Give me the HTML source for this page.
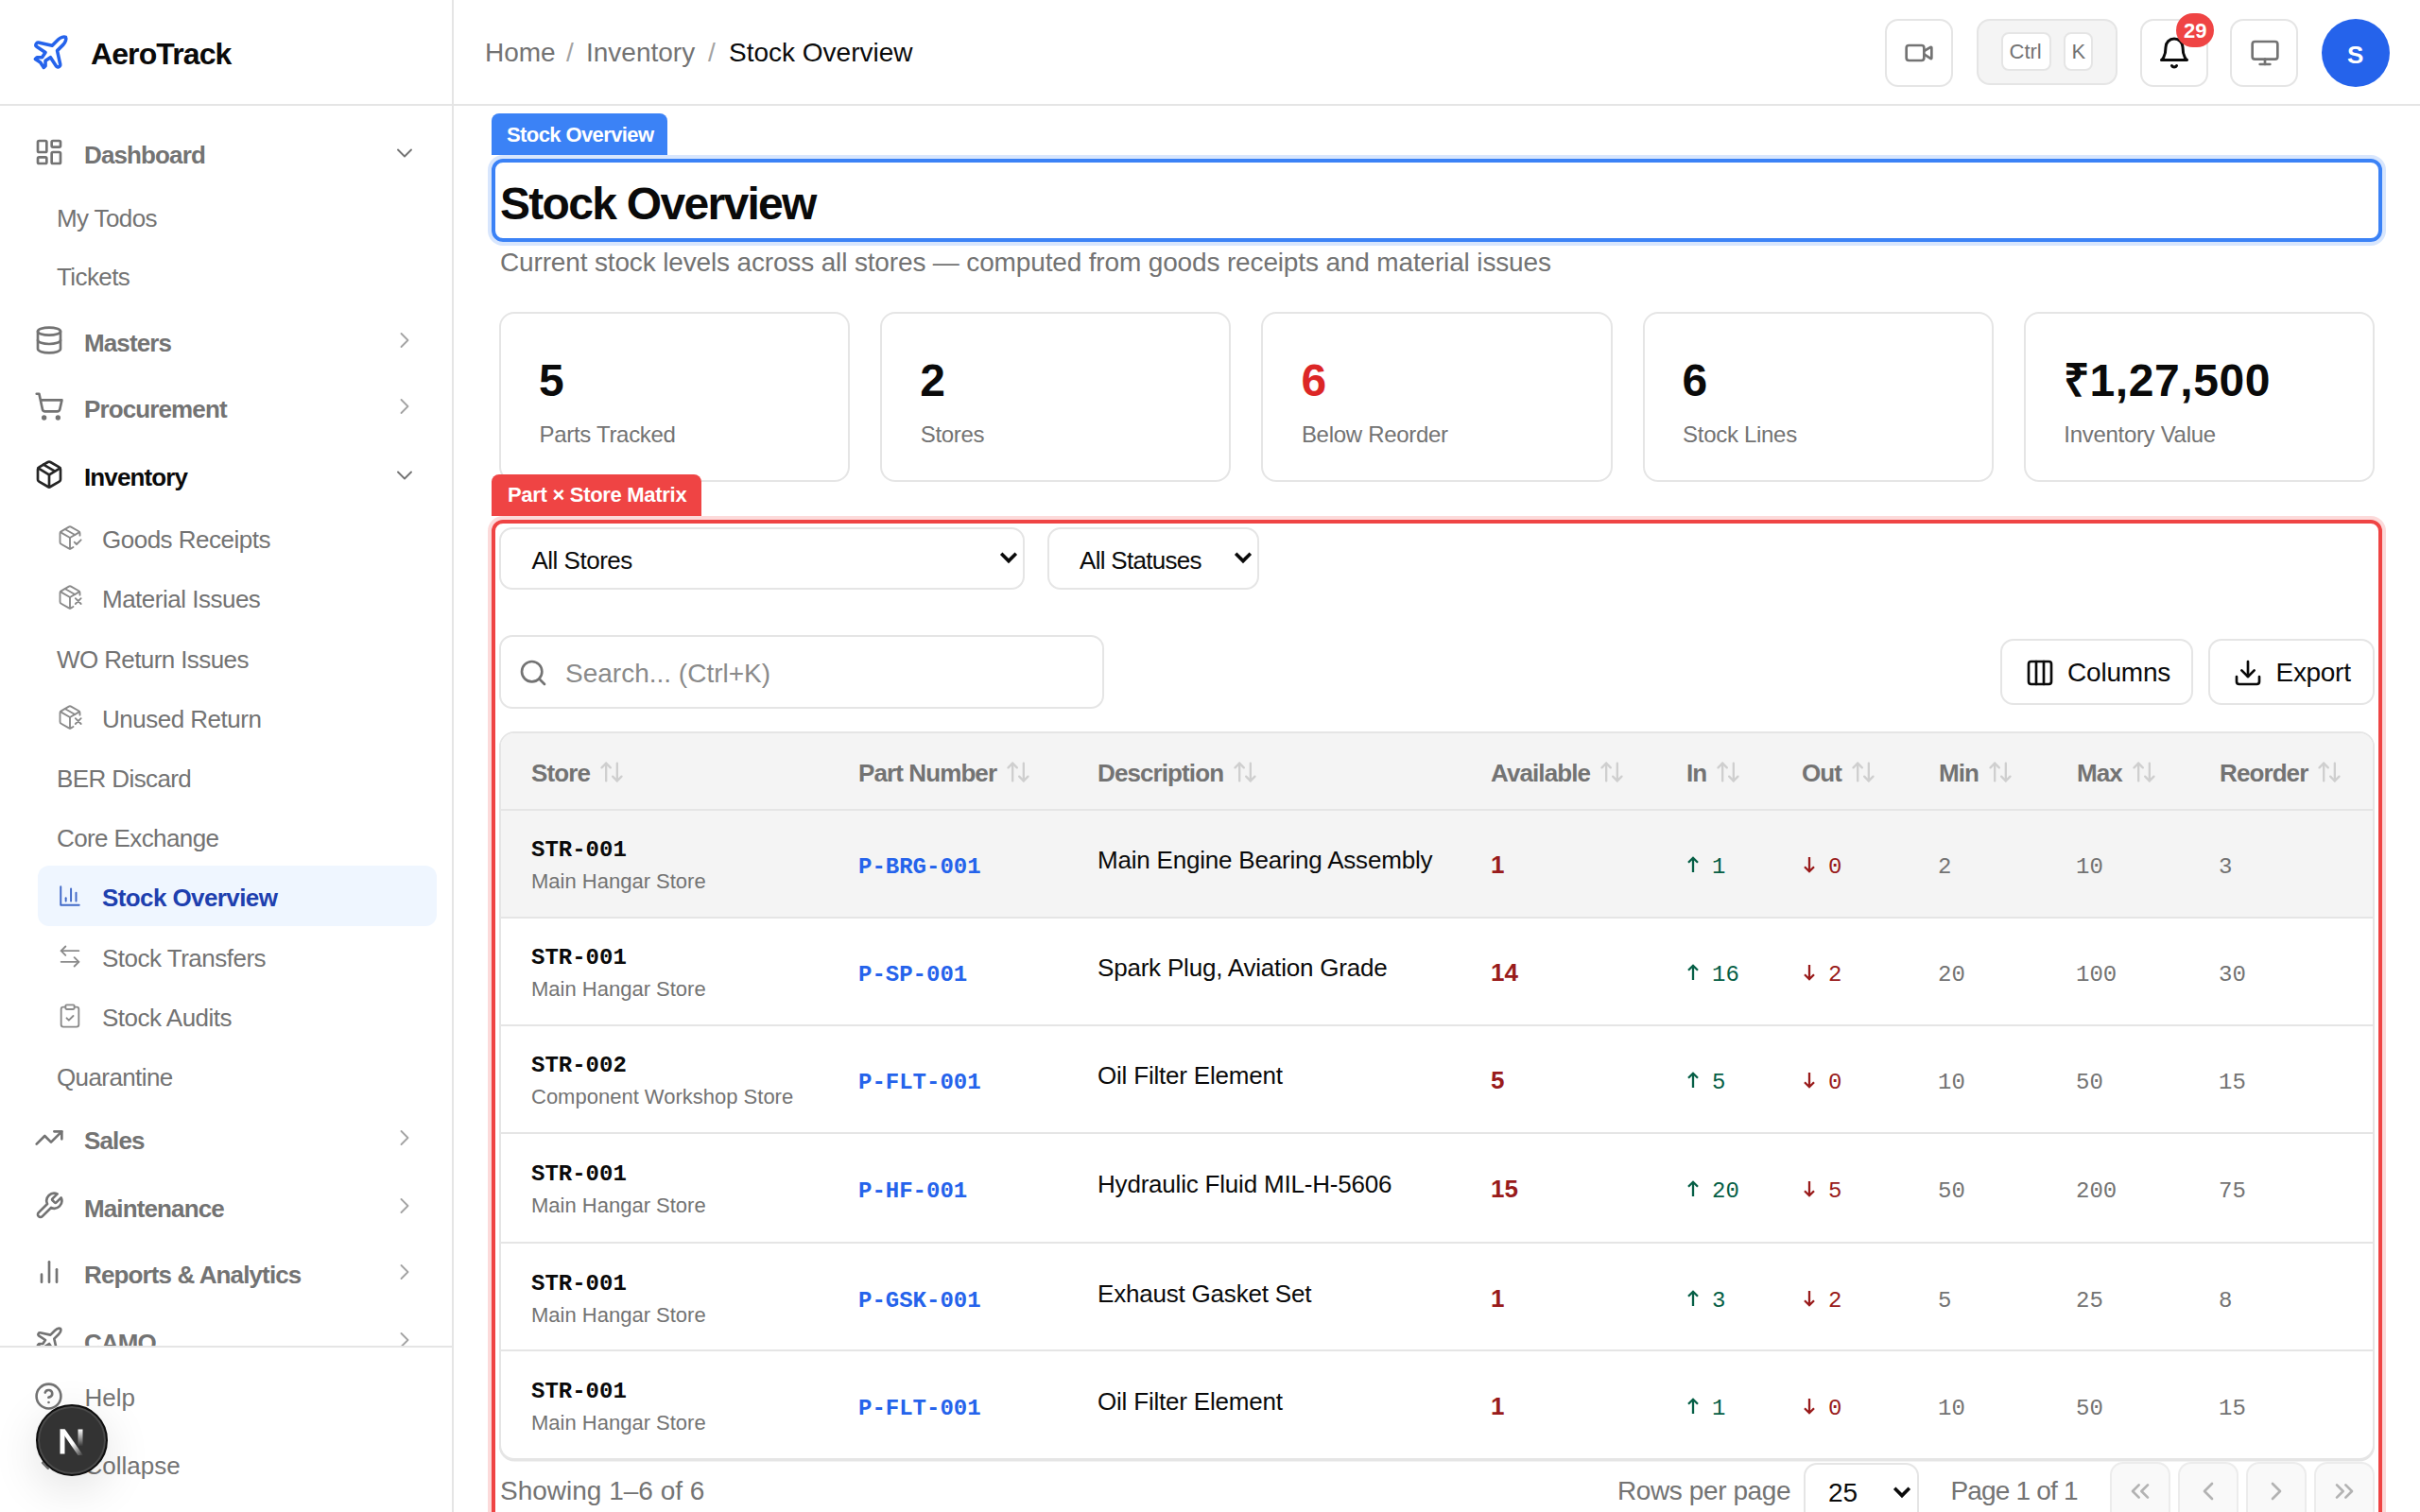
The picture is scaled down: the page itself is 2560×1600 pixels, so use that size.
<!DOCTYPE html>
<html><head><meta charset="utf-8">
<style>
*{box-sizing:border-box;margin:0;padding:0}
html,body{width:2560px;height:1600px;overflow:hidden;background:#fff;font-family:"Liberation Sans",sans-serif;color:#0a0a0a}
svg{display:block}
</style></head><body>
<div style="position:absolute;left:0;top:0;width:480px;height:1600px;background:#fff;overflow:hidden">
<svg style="position:absolute;left:32.3px;top:34.4px;" width="42.8" height="42.8" viewBox="0 0 24 24" fill="none" stroke="#2563eb" stroke-width="2" stroke-linecap="round" stroke-linejoin="round"><path d="M17.8 19.2 16 11l3.5-3.5C21 6 21.5 4 21 3c-1-.5-3 0-4.5 1.5L13 8 4.8 6.2c-.5-.1-.9.1-1.1.5l-.3.5c-.2.5-.1 1 .3 1.3L9 12l-2 3H4l-1 1 3 2 2 3 1-1v-3l3-2 3.5 5.3c.3.4.8.5 1.3.3l.5-.2c.4-.3.6-.7.5-1.2z"/></svg>
<div style="position:absolute;left:96.0px;top:40.7px;font-size:32px;line-height:32px;white-space:nowrap;font-weight:bold;color:#0a0a0a;letter-spacing:-0.9px">AeroTrack</div>
<div style="position:absolute;left:0;top:110px;width:478px;height:2px;background:#e5e5e5"></div>
<div style="position:absolute;left:0;top:112px;width:478px;height:1313px;overflow:hidden">
<svg style="position:absolute;left:36.0px;top:32.5px;" width="32" height="32" viewBox="0 0 24 24" fill="none" stroke="#737373" stroke-width="2" stroke-linecap="round" stroke-linejoin="round"><rect width="7" height="9" x="3" y="3" rx="1"/><rect width="7" height="5" x="14" y="3" rx="1"/><rect width="7" height="9" x="14" y="12" rx="1"/><rect width="7" height="5" x="3" y="16" rx="1"/></svg>
<div style="position:absolute;left:89.0px;top:38.5px;font-size:26px;line-height:26px;white-space:nowrap;font-weight:bold;color:#737373;letter-spacing:-0.88px">Dashboard</div>
<svg style="position:absolute;left:414.0px;top:35.5px;" width="28" height="28" viewBox="0 0 24 24" fill="none" stroke="#737373" stroke-width="1.6" stroke-linecap="round" stroke-linejoin="round"><path d="m6 9 6 6 6-6"/></svg>
<svg style="position:absolute;left:36.0px;top:232.0px;" width="32" height="32" viewBox="0 0 24 24" fill="none" stroke="#737373" stroke-width="2" stroke-linecap="round" stroke-linejoin="round"><ellipse cx="12" cy="5" rx="9" ry="3"/><path d="M3 5V19A9 3 0 0 0 21 19V5"/><path d="M3 12A9 3 0 0 0 21 12"/></svg>
<div style="position:absolute;left:89.0px;top:238.0px;font-size:26px;line-height:26px;white-space:nowrap;font-weight:bold;color:#737373;letter-spacing:-0.88px">Masters</div>
<svg style="position:absolute;left:414.0px;top:234.0px;" width="28" height="28" viewBox="0 0 24 24" fill="none" stroke="#a3a3a3" stroke-width="1.6" stroke-linecap="round" stroke-linejoin="round"><path d="m9 18 6-6-6-6"/></svg>
<svg style="position:absolute;left:36.0px;top:302.0px;" width="32" height="32" viewBox="0 0 24 24" fill="none" stroke="#737373" stroke-width="2" stroke-linecap="round" stroke-linejoin="round"><circle cx="8" cy="21" r="1"/><circle cx="19" cy="21" r="1"/><path d="M2.05 2.05h2l2.66 12.42a2 2 0 0 0 2 1.58h9.78a2 2 0 0 0 1.95-1.57l1.65-7.43H5.12"/></svg>
<div style="position:absolute;left:89.0px;top:308.0px;font-size:26px;line-height:26px;white-space:nowrap;font-weight:bold;color:#737373;letter-spacing:-0.88px">Procurement</div>
<svg style="position:absolute;left:414.0px;top:304.0px;" width="28" height="28" viewBox="0 0 24 24" fill="none" stroke="#a3a3a3" stroke-width="1.6" stroke-linecap="round" stroke-linejoin="round"><path d="m9 18 6-6-6-6"/></svg>
<svg style="position:absolute;left:36.0px;top:374.0px;" width="32" height="32" viewBox="0 0 24 24" fill="none" stroke="#262626" stroke-width="2" stroke-linecap="round" stroke-linejoin="round"><path d="M11 21.73a2 2 0 0 0 2 0l7-4A2 2 0 0 0 21 16V8a2 2 0 0 0-1-1.73l-7-4a2 2 0 0 0-2 0l-7 4A2 2 0 0 0 3 8v8a2 2 0 0 0 1 1.73z"/><path d="M12 22V12"/><path d="m3.3 7 7.703 4.734a2 2 0 0 0 1.994 0L20.7 7"/><path d="m7.5 4.27 9 5.15"/></svg>
<div style="position:absolute;left:89.0px;top:380.0px;font-size:26px;line-height:26px;white-space:nowrap;font-weight:bold;color:#0a0a0a;letter-spacing:-0.88px">Inventory</div>
<svg style="position:absolute;left:414.0px;top:377.0px;" width="28" height="28" viewBox="0 0 24 24" fill="none" stroke="#737373" stroke-width="1.6" stroke-linecap="round" stroke-linejoin="round"><path d="m6 9 6 6 6-6"/></svg>
<svg style="position:absolute;left:36.0px;top:1076.0px;" width="32" height="32" viewBox="0 0 24 24" fill="none" stroke="#737373" stroke-width="2" stroke-linecap="round" stroke-linejoin="round"><polyline points="22 7 13.5 15.5 8.5 10.5 2 17"/><polyline points="16 7 22 7 22 13"/></svg>
<div style="position:absolute;left:89.0px;top:1082.0px;font-size:26px;line-height:26px;white-space:nowrap;font-weight:bold;color:#737373;letter-spacing:-0.88px">Sales</div>
<svg style="position:absolute;left:414.0px;top:1078.0px;" width="28" height="28" viewBox="0 0 24 24" fill="none" stroke="#a3a3a3" stroke-width="1.6" stroke-linecap="round" stroke-linejoin="round"><path d="m9 18 6-6-6-6"/></svg>
<svg style="position:absolute;left:36.0px;top:1148.0px;" width="32" height="32" viewBox="0 0 24 24" fill="none" stroke="#737373" stroke-width="2" stroke-linecap="round" stroke-linejoin="round"><path d="M14.7 6.3a1 1 0 0 0 0 1.4l1.6 1.6a1 1 0 0 0 1.4 0l3.77-3.77a6 6 0 0 1-7.94 7.94l-6.91 6.91a2.12 2.12 0 0 1-3-3l6.91-6.91a6 6 0 0 1 7.94-7.94l-3.76 3.76z"/></svg>
<div style="position:absolute;left:89.0px;top:1154.0px;font-size:26px;line-height:26px;white-space:nowrap;font-weight:bold;color:#737373;letter-spacing:-0.88px">Maintenance</div>
<svg style="position:absolute;left:414.0px;top:1150.0px;" width="28" height="28" viewBox="0 0 24 24" fill="none" stroke="#a3a3a3" stroke-width="1.6" stroke-linecap="round" stroke-linejoin="round"><path d="m9 18 6-6-6-6"/></svg>
<svg style="position:absolute;left:36.0px;top:1218.0px;" width="32" height="32" viewBox="0 0 24 24" fill="none" stroke="#737373" stroke-width="2" stroke-linecap="round" stroke-linejoin="round"><line x1="18" x2="18" y1="20" y2="10"/><line x1="12" x2="12" y1="20" y2="4"/><line x1="6" x2="6" y1="20" y2="14"/></svg>
<div style="position:absolute;left:89.0px;top:1224.0px;font-size:26px;line-height:26px;white-space:nowrap;font-weight:bold;color:#737373;letter-spacing:-0.88px">Reports &amp; Analytics</div>
<svg style="position:absolute;left:414.0px;top:1220.0px;" width="28" height="28" viewBox="0 0 24 24" fill="none" stroke="#a3a3a3" stroke-width="1.6" stroke-linecap="round" stroke-linejoin="round"><path d="m9 18 6-6-6-6"/></svg>
<svg style="position:absolute;left:36.0px;top:1290.0px;" width="32" height="32" viewBox="0 0 24 24" fill="none" stroke="#737373" stroke-width="2" stroke-linecap="round" stroke-linejoin="round"><path d="M17.8 19.2 16 11l3.5-3.5C21 6 21.5 4 21 3c-1-.5-3 0-4.5 1.5L13 8 4.8 6.2c-.5-.1-.9.1-1.1.5l-.3.5c-.2.5-.1 1 .3 1.3L9 12l-2 3H4l-1 1 3 2 2 3 1-1v-3l3-2 3.5 5.3c.3.4.8.5 1.3.3l.5-.2c.4-.3.6-.7.5-1.2z"/></svg>
<div style="position:absolute;left:89.0px;top:1296.0px;font-size:26px;line-height:26px;white-space:nowrap;font-weight:bold;color:#737373;letter-spacing:-0.88px">CAMO</div>
<svg style="position:absolute;left:414.0px;top:1292.0px;" width="28" height="28" viewBox="0 0 24 24" fill="none" stroke="#a3a3a3" stroke-width="1.6" stroke-linecap="round" stroke-linejoin="round"><path d="m9 18 6-6-6-6"/></svg>
<div style="position:absolute;left:60.0px;top:106.0px;font-size:26px;line-height:26px;white-space:nowrap;color:#737373;letter-spacing:-0.6px">My Todos</div>
<div style="position:absolute;left:60.0px;top:168.0px;font-size:26px;line-height:26px;white-space:nowrap;color:#737373;letter-spacing:-0.6px">Tickets</div>
<svg style="position:absolute;left:59.7px;top:443.2px;" width="28" height="28" viewBox="0 0 24 24" fill="none" stroke="#8a8a8a" stroke-width="1.6" stroke-linecap="round" stroke-linejoin="round"><path d="m16 16 2 2 4-4"/><path d="M21 10V8a2 2 0 0 0-1-1.73l-7-4a2 2 0 0 0-2 0l-7 4A2 2 0 0 0 3 8v8a2 2 0 0 0 1 1.73l7 4a2 2 0 0 0 2 0l2-1.14"/><path d="m7.5 4.27 9 5.15"/><polyline points="3.29 7 12 12 20.71 7"/><line x1="12" x2="12" y1="22" y2="12"/></svg>
<div style="position:absolute;left:108.0px;top:446.2px;font-size:26px;line-height:26px;white-space:nowrap;color:#737373;letter-spacing:-0.5px">Goods Receipts</div>
<svg style="position:absolute;left:59.7px;top:506.4px;" width="28" height="28" viewBox="0 0 24 24" fill="none" stroke="#8a8a8a" stroke-width="1.6" stroke-linecap="round" stroke-linejoin="round"><path d="M21 10V8a2 2 0 0 0-1-1.73l-7-4a2 2 0 0 0-2 0l-7 4A2 2 0 0 0 3 8v8a2 2 0 0 0 1 1.73l7 4a2 2 0 0 0 2 0l2-1.14"/><path d="m7.5 4.27 9 5.15"/><polyline points="3.29 7 12 12 20.71 7"/><line x1="12" x2="12" y1="22" y2="12"/><path d="m17 13 5 5m-5 0 5-5"/></svg>
<div style="position:absolute;left:108.0px;top:509.4px;font-size:26px;line-height:26px;white-space:nowrap;color:#737373;letter-spacing:-0.5px">Material Issues</div>
<div style="position:absolute;left:60.0px;top:572.6px;font-size:26px;line-height:26px;white-space:nowrap;color:#737373;letter-spacing:-0.6px">WO Return Issues</div>
<svg style="position:absolute;left:59.7px;top:632.8px;" width="28" height="28" viewBox="0 0 24 24" fill="none" stroke="#8a8a8a" stroke-width="1.6" stroke-linecap="round" stroke-linejoin="round"><path d="M21 10V8a2 2 0 0 0-1-1.73l-7-4a2 2 0 0 0-2 0l-7 4A2 2 0 0 0 3 8v8a2 2 0 0 0 1 1.73l7 4a2 2 0 0 0 2 0l2-1.14"/><path d="m7.5 4.27 9 5.15"/><polyline points="3.29 7 12 12 20.71 7"/><line x1="12" x2="12" y1="22" y2="12"/><path d="m17 13 5 5m-5 0 5-5"/></svg>
<div style="position:absolute;left:108.0px;top:635.8px;font-size:26px;line-height:26px;white-space:nowrap;color:#737373;letter-spacing:-0.5px">Unused Return</div>
<div style="position:absolute;left:60.0px;top:699.0px;font-size:26px;line-height:26px;white-space:nowrap;color:#737373;letter-spacing:-0.6px">BER Discard</div>
<div style="position:absolute;left:60.0px;top:762.2px;font-size:26px;line-height:26px;white-space:nowrap;color:#737373;letter-spacing:-0.6px">Core Exchange</div>
<div style="position:absolute;left:40px;top:804.0px;width:422px;height:64px;border-radius:12px;background:#eff6ff"></div>
<svg style="position:absolute;left:61.0px;top:823.4px;" width="26" height="26" viewBox="0 0 24 24" fill="none" stroke="#4169c8" stroke-width="1.8" stroke-linecap="round" stroke-linejoin="round"><path d="M3 3v18h18"/><path d="M18 17V9"/><path d="M13 17V5"/><path d="M8 17v-3"/></svg>
<div style="position:absolute;left:108.0px;top:825.4px;font-size:26px;line-height:26px;white-space:nowrap;font-weight:bold;color:#1e40af;letter-spacing:-0.6px">Stock Overview</div>
<svg style="position:absolute;left:59.7px;top:885.6px;" width="28" height="28" viewBox="0 0 24 24" fill="none" stroke="#8a8a8a" stroke-width="1.6" stroke-linecap="round" stroke-linejoin="round"><path d="M8 3 4 7l4 4"/><path d="M4 7h16"/><path d="m16 21 4-4-4-4"/><path d="M20 17H4"/></svg>
<div style="position:absolute;left:108.0px;top:888.6px;font-size:26px;line-height:26px;white-space:nowrap;color:#737373;letter-spacing:-0.5px">Stock Transfers</div>
<svg style="position:absolute;left:59.7px;top:948.8px;" width="28" height="28" viewBox="0 0 24 24" fill="none" stroke="#8a8a8a" stroke-width="1.6" stroke-linecap="round" stroke-linejoin="round"><rect width="8" height="4" x="8" y="2" rx="1" ry="1"/><path d="M16 4h2a2 2 0 0 1 2 2v14a2 2 0 0 1-2 2H6a2 2 0 0 1-2-2V6a2 2 0 0 1 2-2h2"/><path d="m9 14 2 2 4-4"/></svg>
<div style="position:absolute;left:108.0px;top:951.8px;font-size:26px;line-height:26px;white-space:nowrap;color:#737373;letter-spacing:-0.5px">Stock Audits</div>
<div style="position:absolute;left:60.0px;top:1015.0px;font-size:26px;line-height:26px;white-space:nowrap;color:#737373;letter-spacing:-0.6px">Quarantine</div>
</div>
<div style="position:absolute;left:0;top:1424px;width:478px;height:2px;background:#e5e5e5"></div>
<svg style="position:absolute;left:36.4px;top:1462.1px;" width="31" height="31" viewBox="0 0 24 24" fill="none" stroke="#737373" stroke-width="2" stroke-linecap="round" stroke-linejoin="round"><circle cx="12" cy="12" r="10"/><path d="M9.09 9a3 3 0 0 1 5.83 1c0 2-3 3-3 3"/><path d="M12 17h.01"/></svg>
<div style="position:absolute;left:89.5px;top:1465.7px;font-size:26px;line-height:26px;white-space:nowrap;color:#737373">Help</div>
<svg style="position:absolute;left:38.0px;top:1534.0px;" width="28" height="28" viewBox="0 0 24 24" fill="none" stroke="#737373" stroke-width="2" stroke-linecap="round" stroke-linejoin="round"><path d="m11 17-5-5 5-5"/><path d="m18 17-5-5 5-5"/></svg>
<div style="position:absolute;left:89.5px;top:1537.6px;font-size:26px;line-height:26px;white-space:nowrap;color:#737373">Collapse</div>
</div>
<div style="position:absolute;left:478px;top:0;width:2px;height:1600px;background:#e5e5e5"></div>
<div style="position:absolute;left:480px;top:110px;width:2080px;height:2px;background:#e5e5e5"></div>
<div style="position:absolute;left:513.0px;top:42.3px;font-size:28px;line-height:28px;white-space:nowrap;color:#737373">Home</div>
<div style="position:absolute;left:599.0px;top:42.3px;font-size:28px;line-height:28px;white-space:nowrap;color:#a3a3a3">/</div>
<div style="position:absolute;left:620.0px;top:42.3px;font-size:28px;line-height:28px;white-space:nowrap;color:#737373">Inventory</div>
<div style="position:absolute;left:749.0px;top:42.3px;font-size:28px;line-height:28px;white-space:nowrap;color:#a3a3a3">/</div>
<div style="position:absolute;left:771.0px;top:42.3px;font-size:28px;line-height:28px;white-space:nowrap;color:#0a0a0a;font-weight:500">Stock Overview</div>
<div style="position:absolute;left:1994px;top:20px;width:72px;height:72px;border:2px solid #e5e5e5;border-radius:14px;background:#fff"></div>
<svg style="position:absolute;left:2013.7px;top:40.0px;" width="32" height="32" viewBox="0 0 24 24" fill="none" stroke="#737373" stroke-width="2" stroke-linecap="round" stroke-linejoin="round"><path d="m16 13 5.223 3.482a.5.5 0 0 0 .777-.416V7.87a.5.5 0 0 0-.752-.432L16 10.5"/><rect x="2" y="6" width="14" height="12" rx="2"/></svg>
<div style="position:absolute;left:2091px;top:20px;width:149px;height:70px;border:2px solid #e5e5e5;border-radius:14px;background:#f4f4f4"></div>
<div style="position:absolute;left:2117px;top:34px;width:53px;height:41px;border:2px solid #e5e5e5;border-radius:8px;background:#fff"></div>
<div style="position:absolute;left:2125.5px;top:43.9px;font-size:22px;line-height:22px;white-space:nowrap;color:#737373">Ctrl</div>
<div style="position:absolute;left:2183px;top:34px;width:31px;height:41px;border:2px solid #e5e5e5;border-radius:8px;background:#fff"></div>
<div style="position:absolute;left:2191.5px;top:43.9px;font-size:22px;line-height:22px;white-space:nowrap;color:#737373">K</div>
<div style="position:absolute;left:2264px;top:20px;width:72px;height:72px;border:2px solid #e5e5e5;border-radius:14px;background:#fff"></div>
<svg style="position:absolute;left:2282.0px;top:38.0px;" width="36" height="36" viewBox="0 0 24 24" fill="none" stroke="#0a0a0a" stroke-width="2" stroke-linecap="round" stroke-linejoin="round"><path d="M6 8a6 6 0 0 1 12 0c0 7 3 9 3 9H3s3-2 3-9"/><path d="M10.3 21a1.94 1.94 0 0 0 3.4 0"/></svg>
<div style="position:absolute;left:2302px;top:14px;width:40px;height:36px;border-radius:18px;background:#ef4444"></div>
<div style="position:absolute;left:2310.0px;top:22.4px;font-size:22px;line-height:22px;white-space:nowrap;color:#fff;font-weight:bold;letter-spacing:0">29</div>
<div style="position:absolute;left:2359px;top:20px;width:72px;height:72px;border:2px solid #e5e5e5;border-radius:14px;background:#fff"></div>
<svg style="position:absolute;left:2380.0px;top:40.0px;" width="32" height="32" viewBox="0 0 24 24" fill="none" stroke="#737373" stroke-width="2" stroke-linecap="round" stroke-linejoin="round"><rect width="20" height="14" x="2" y="3" rx="2"/><line x1="8" x2="16" y1="21" y2="21"/><line x1="12" x2="12" y1="17" y2="21"/></svg>
<div style="position:absolute;left:2456px;top:20px;width:72px;height:72px;border-radius:50%;background:#2563eb"></div>
<div style="position:absolute;left:2483.0px;top:44.5px;font-size:26px;line-height:26px;white-space:nowrap;color:#fff;font-weight:bold;letter-spacing:-0.88px">S</div>
<div style="position:absolute;left:520px;top:120px;width:186px;height:44px;background:#3b82f6;border-radius:8px 8px 0 0"></div>
<div style="position:absolute;left:536.0px;top:131.7px;font-size:22px;line-height:22px;white-space:nowrap;color:#fff;font-weight:bold;letter-spacing:-0.6px">Stock Overview</div>
<div style="position:absolute;left:520px;top:168px;width:2000px;height:88px;border:4px solid #3b82f6;border-radius:12px;background:transparent;box-shadow:0 0 0 4px rgba(59,130,246,0.2)"></div>
<div style="position:absolute;left:529.0px;top:192.2px;font-size:48px;line-height:48px;white-space:nowrap;font-weight:bold;color:#0a0a0a;letter-spacing:-1.7px">Stock Overview</div>
<div style="position:absolute;left:529.0px;top:264.1px;font-size:28px;line-height:28px;white-space:nowrap;color:#737373;letter-spacing:-0.15px">Current stock levels across all stores — computed from goods receipts and material issues</div>
<div style="position:absolute;left:528.0px;top:330px;width:371.2px;height:180px;border:2px solid #e5e5e5;border-radius:16px;background:#fff;"></div>
<div style="position:absolute;left:570.0px;top:379.1px;font-size:48px;line-height:48px;white-space:nowrap;font-weight:bold;color:#0a0a0a;letter-spacing:-0.5px">5</div>
<div style="position:absolute;left:570.5px;top:447.7px;font-size:24px;line-height:24px;white-space:nowrap;color:#737373;letter-spacing:-0.3px">Parts Tracked</div>
<div style="position:absolute;left:931.2px;top:330px;width:371.2px;height:180px;border:2px solid #e5e5e5;border-radius:16px;background:#fff;"></div>
<div style="position:absolute;left:973.2px;top:379.1px;font-size:48px;line-height:48px;white-space:nowrap;font-weight:bold;color:#0a0a0a;letter-spacing:-0.5px">2</div>
<div style="position:absolute;left:973.7px;top:447.7px;font-size:24px;line-height:24px;white-space:nowrap;color:#737373;letter-spacing:-0.3px">Stores</div>
<div style="position:absolute;left:1334.4px;top:330px;width:371.2px;height:180px;border:2px solid #e5e5e5;border-radius:16px;background:#fff;"></div>
<div style="position:absolute;left:1376.4px;top:379.1px;font-size:48px;line-height:48px;white-space:nowrap;font-weight:bold;color:#dc2626;letter-spacing:-0.5px">6</div>
<div style="position:absolute;left:1376.9px;top:447.7px;font-size:24px;line-height:24px;white-space:nowrap;color:#737373;letter-spacing:-0.3px">Below Reorder</div>
<div style="position:absolute;left:1737.6px;top:330px;width:371.2px;height:180px;border:2px solid #e5e5e5;border-radius:16px;background:#fff;"></div>
<div style="position:absolute;left:1779.6px;top:379.1px;font-size:48px;line-height:48px;white-space:nowrap;font-weight:bold;color:#0a0a0a;letter-spacing:-0.5px">6</div>
<div style="position:absolute;left:1780.1px;top:447.7px;font-size:24px;line-height:24px;white-space:nowrap;color:#737373;letter-spacing:-0.3px">Stock Lines</div>
<div style="position:absolute;left:2140.8px;top:330px;width:371.2px;height:180px;border:2px solid #e5e5e5;border-radius:16px;background:#fff;"></div>
<div style="position:absolute;left:2182.8px;top:379.1px;font-size:48px;line-height:48px;white-space:nowrap;font-weight:bold;color:#0a0a0a;letter-spacing:0.6px">₹1,27,500</div>
<div style="position:absolute;left:2183.3px;top:447.7px;font-size:24px;line-height:24px;white-space:nowrap;color:#737373;letter-spacing:-0.3px">Inventory Value</div>
<div style="position:absolute;left:520px;top:502px;width:222px;height:44px;background:#ef4444;border-radius:8px 8px 0 0"></div>
<div style="position:absolute;left:537.0px;top:513.4px;font-size:22px;line-height:22px;white-space:nowrap;color:#fff;font-weight:bold;letter-spacing:-0.3px">Part × Store Matrix</div>
<div style="position:absolute;left:520px;top:550px;width:2000px;height:1200px;border:4px solid #ef4444;border-radius:12px;background:transparent;box-shadow:0 0 0 4px rgba(239,68,68,0.2)"></div>
<div style="position:absolute;left:528px;top:558px;width:556px;height:66px;border:2px solid #e5e5e5;border-radius:14px;background:#fff;"></div>
<div style="position:absolute;left:562.5px;top:579.7px;font-size:26px;line-height:26px;white-space:nowrap;color:#0a0a0a;letter-spacing:-0.5px">All Stores</div>
<svg style="position:absolute;left:1054.5px;top:581.5px" width="24" height="18" viewBox="0 0 24 18"><path d="M4.2 3.8 L12 11.6 L19.8 3.8" fill="none" stroke="#0a0a0a" stroke-width="3.6" stroke-linecap="butt" stroke-linejoin="miter"/></svg>
<div style="position:absolute;left:1108px;top:558px;width:224px;height:66px;border:2px solid #e5e5e5;border-radius:14px;background:#fff;"></div>
<div style="position:absolute;left:1142.0px;top:579.7px;font-size:26px;line-height:26px;white-space:nowrap;color:#0a0a0a;letter-spacing:-0.7px">All Statuses</div>
<svg style="position:absolute;left:1302.5px;top:581.5px" width="24" height="18" viewBox="0 0 24 18"><path d="M4.2 3.8 L12 11.6 L19.8 3.8" fill="none" stroke="#0a0a0a" stroke-width="3.6" stroke-linecap="butt" stroke-linejoin="miter"/></svg>
<div style="position:absolute;left:528px;top:672px;width:640px;height:78px;border:2px solid #e5e5e5;border-radius:14px;background:#fff;"></div>
<svg style="position:absolute;left:547.6px;top:696.3px;" width="32" height="32" viewBox="0 0 24 24" fill="none" stroke="#737373" stroke-width="2" stroke-linecap="round" stroke-linejoin="round"><circle cx="11" cy="11" r="8"/><path d="m21 21-4.3-4.3"/></svg>
<div style="position:absolute;left:598.0px;top:699.3px;font-size:28px;line-height:28px;white-space:nowrap;color:#8a8a8a">Search... (Ctrl+K)</div>
<div style="position:absolute;left:2116px;top:676px;width:204px;height:70px;border:2px solid #e5e5e5;border-radius:14px;background:#fff;"></div>
<svg style="position:absolute;left:2141.8px;top:695.8px;" width="32" height="32" viewBox="0 0 24 24" fill="none" stroke="#0a0a0a" stroke-width="2" stroke-linecap="round" stroke-linejoin="round"><rect width="18" height="18" x="3" y="3" rx="2"/><path d="M9 3v18"/><path d="M15 3v18"/></svg>
<div style="position:absolute;left:2187.0px;top:698.3px;font-size:28px;line-height:28px;white-space:nowrap;color:#0a0a0a;letter-spacing:-0.2px">Columns</div>
<div style="position:absolute;left:2336px;top:676px;width:176px;height:70px;border:2px solid #e5e5e5;border-radius:14px;background:#fff;"></div>
<svg style="position:absolute;left:2361.9px;top:695.8px;" width="32" height="32" viewBox="0 0 24 24" fill="none" stroke="#0a0a0a" stroke-width="2" stroke-linecap="round" stroke-linejoin="round"><path d="M21 15v4a2 2 0 0 1-2 2H5a2 2 0 0 1-2-2v-4"/><polyline points="7 10 12 15 17 10"/><line x1="12" x2="12" y1="15" y2="3"/></svg>
<div style="position:absolute;left:2407.5px;top:698.3px;font-size:28px;line-height:28px;white-space:nowrap;color:#0a0a0a;letter-spacing:-0.3px">Export</div>
<div style="position:absolute;left:528px;top:774px;width:1984px;height:771px;border:2px solid #e5e5e5;border-radius:16px;background:#fff;overflow:hidden;box-shadow:0 1.5px 0 #e5e5e5">
<div style="position:absolute;left:0;top:0;width:1980px;height:80px;background:#f4f4f4"></div>
<div style="position:absolute;left:0;top:80px;width:1980px;height:2px;background:#e5e5e5"></div>
<div style="position:absolute;left:32px;top:28.9px;height:26px;display:flex;align-items:flex-start;white-space:nowrap;font-size:26px;line-height:26px;font-weight:bold;color:#737373;letter-spacing:-0.9px">Store<svg style="margin-left:9px;margin-top:-2.4px;flex:none" width="28" height="28" viewBox="0 0 24 24" fill="none" stroke="#cfcfcf" stroke-width="2" stroke-linecap="round" stroke-linejoin="round"><path d="m21 16-4 4-4-4"/><path d="M17 20V4"/><path d="m3 8 4-4 4 4"/><path d="M7 4v16"/></svg></div>
<div style="position:absolute;left:378px;top:28.9px;height:26px;display:flex;align-items:flex-start;white-space:nowrap;font-size:26px;line-height:26px;font-weight:bold;color:#737373;letter-spacing:-0.9px">Part Number<svg style="margin-left:9px;margin-top:-2.4px;flex:none" width="28" height="28" viewBox="0 0 24 24" fill="none" stroke="#cfcfcf" stroke-width="2" stroke-linecap="round" stroke-linejoin="round"><path d="m21 16-4 4-4-4"/><path d="M17 20V4"/><path d="m3 8 4-4 4 4"/><path d="M7 4v16"/></svg></div>
<div style="position:absolute;left:631px;top:28.9px;height:26px;display:flex;align-items:flex-start;white-space:nowrap;font-size:26px;line-height:26px;font-weight:bold;color:#737373;letter-spacing:-0.9px">Description<svg style="margin-left:9px;margin-top:-2.4px;flex:none" width="28" height="28" viewBox="0 0 24 24" fill="none" stroke="#cfcfcf" stroke-width="2" stroke-linecap="round" stroke-linejoin="round"><path d="m21 16-4 4-4-4"/><path d="M17 20V4"/><path d="m3 8 4-4 4 4"/><path d="M7 4v16"/></svg></div>
<div style="position:absolute;left:1047px;top:28.9px;height:26px;display:flex;align-items:flex-start;white-space:nowrap;font-size:26px;line-height:26px;font-weight:bold;color:#737373;letter-spacing:-0.9px">Available<svg style="margin-left:9px;margin-top:-2.4px;flex:none" width="28" height="28" viewBox="0 0 24 24" fill="none" stroke="#cfcfcf" stroke-width="2" stroke-linecap="round" stroke-linejoin="round"><path d="m21 16-4 4-4-4"/><path d="M17 20V4"/><path d="m3 8 4-4 4 4"/><path d="M7 4v16"/></svg></div>
<div style="position:absolute;left:1254px;top:28.9px;height:26px;display:flex;align-items:flex-start;white-space:nowrap;font-size:26px;line-height:26px;font-weight:bold;color:#737373;letter-spacing:-0.9px">In<svg style="margin-left:9px;margin-top:-2.4px;flex:none" width="28" height="28" viewBox="0 0 24 24" fill="none" stroke="#cfcfcf" stroke-width="2" stroke-linecap="round" stroke-linejoin="round"><path d="m21 16-4 4-4-4"/><path d="M17 20V4"/><path d="m3 8 4-4 4 4"/><path d="M7 4v16"/></svg></div>
<div style="position:absolute;left:1376px;top:28.9px;height:26px;display:flex;align-items:flex-start;white-space:nowrap;font-size:26px;line-height:26px;font-weight:bold;color:#737373;letter-spacing:-0.9px">Out<svg style="margin-left:9px;margin-top:-2.4px;flex:none" width="28" height="28" viewBox="0 0 24 24" fill="none" stroke="#cfcfcf" stroke-width="2" stroke-linecap="round" stroke-linejoin="round"><path d="m21 16-4 4-4-4"/><path d="M17 20V4"/><path d="m3 8 4-4 4 4"/><path d="M7 4v16"/></svg></div>
<div style="position:absolute;left:1521px;top:28.9px;height:26px;display:flex;align-items:flex-start;white-space:nowrap;font-size:26px;line-height:26px;font-weight:bold;color:#737373;letter-spacing:-0.9px">Min<svg style="margin-left:9px;margin-top:-2.4px;flex:none" width="28" height="28" viewBox="0 0 24 24" fill="none" stroke="#cfcfcf" stroke-width="2" stroke-linecap="round" stroke-linejoin="round"><path d="m21 16-4 4-4-4"/><path d="M17 20V4"/><path d="m3 8 4-4 4 4"/><path d="M7 4v16"/></svg></div>
<div style="position:absolute;left:1667px;top:28.9px;height:26px;display:flex;align-items:flex-start;white-space:nowrap;font-size:26px;line-height:26px;font-weight:bold;color:#737373;letter-spacing:-0.9px">Max<svg style="margin-left:9px;margin-top:-2.4px;flex:none" width="28" height="28" viewBox="0 0 24 24" fill="none" stroke="#cfcfcf" stroke-width="2" stroke-linecap="round" stroke-linejoin="round"><path d="m21 16-4 4-4-4"/><path d="M17 20V4"/><path d="m3 8 4-4 4 4"/><path d="M7 4v16"/></svg></div>
<div style="position:absolute;left:1818px;top:28.9px;height:26px;display:flex;align-items:flex-start;white-space:nowrap;font-size:26px;line-height:26px;font-weight:bold;color:#737373;letter-spacing:-0.9px">Reorder<svg style="margin-left:9px;margin-top:-2.4px;flex:none" width="28" height="28" viewBox="0 0 24 24" fill="none" stroke="#cfcfcf" stroke-width="2" stroke-linecap="round" stroke-linejoin="round"><path d="m21 16-4 4-4-4"/><path d="M17 20V4"/><path d="m3 8 4-4 4 4"/><path d="M7 4v16"/></svg></div>
<div style="position:absolute;left:0;top:82px;width:1980px;height:112px;background:#f4f4f4"></div>
<div style="position:absolute;left:0;top:194px;width:1980px;height:2px;background:#e5e5e5"></div>
<div style="position:absolute;left:32.0px;top:111.6px;font-size:24px;line-height:24px;white-space:nowrap;font-family:'Liberation Mono',monospace;font-weight:bold;color:#0a0a0a">STR-001</div>
<div style="position:absolute;left:32.0px;top:146.0px;font-size:22px;line-height:22px;white-space:nowrap;color:#737373">Main Hangar Store</div>
<div style="position:absolute;left:378.0px;top:129.6px;font-size:24px;line-height:24px;white-space:nowrap;font-family:'Liberation Mono',monospace;font-weight:bold;color:#2563eb">P-BRG-001</div>
<div style="position:absolute;left:631.0px;top:120.7px;font-size:26px;line-height:26px;white-space:nowrap;color:#0a0a0a;letter-spacing:-0.2px">Main Engine Bearing Assembly</div>
<div style="position:absolute;left:1047.0px;top:126.0px;font-size:26px;line-height:26px;white-space:nowrap;font-weight:bold;color:#991b1b;letter-spacing:0">1</div>
<svg style="position:absolute;left:1254.5px;top:130px" width="12" height="18" viewBox="0 0 12 18"><path d="M6 17V1.8 M1 6.8 L6 1.8 L11 6.8" fill="none" stroke="#065f46" stroke-width="2.3" stroke-linecap="butt" stroke-linejoin="miter"/></svg>
<div style="position:absolute;left:1281.0px;top:129.6px;font-size:24px;line-height:24px;white-space:nowrap;font-family:'Liberation Mono',monospace;color:#065f46">1</div>
<svg style="position:absolute;left:1377.5px;top:130px" width="12" height="18" viewBox="0 0 12 18"><path d="M6 1V16.2 M1 11.2 L6 16.2 L11 11.2" fill="none" stroke="#991b1b" stroke-width="2.3" stroke-linecap="butt" stroke-linejoin="miter"/></svg>
<div style="position:absolute;left:1404.0px;top:129.6px;font-size:24px;line-height:24px;white-space:nowrap;font-family:'Liberation Mono',monospace;color:#991b1b">0</div>
<div style="position:absolute;left:1520.0px;top:129.6px;font-size:24px;line-height:24px;white-space:nowrap;font-family:'Liberation Mono',monospace;color:#737373">2</div>
<div style="position:absolute;left:1666.0px;top:129.6px;font-size:24px;line-height:24px;white-space:nowrap;font-family:'Liberation Mono',monospace;color:#737373">10</div>
<div style="position:absolute;left:1817.0px;top:129.6px;font-size:24px;line-height:24px;white-space:nowrap;font-family:'Liberation Mono',monospace;color:#737373">3</div>
<div style="position:absolute;left:0;top:308px;width:1980px;height:2px;background:#e5e5e5"></div>
<div style="position:absolute;left:32.0px;top:225.6px;font-size:24px;line-height:24px;white-space:nowrap;font-family:'Liberation Mono',monospace;font-weight:bold;color:#0a0a0a">STR-001</div>
<div style="position:absolute;left:32.0px;top:260.0px;font-size:22px;line-height:22px;white-space:nowrap;color:#737373">Main Hangar Store</div>
<div style="position:absolute;left:378.0px;top:243.6px;font-size:24px;line-height:24px;white-space:nowrap;font-family:'Liberation Mono',monospace;font-weight:bold;color:#2563eb">P-SP-001</div>
<div style="position:absolute;left:631.0px;top:234.7px;font-size:26px;line-height:26px;white-space:nowrap;color:#0a0a0a;letter-spacing:-0.2px">Spark Plug, Aviation Grade</div>
<div style="position:absolute;left:1047.0px;top:240.0px;font-size:26px;line-height:26px;white-space:nowrap;font-weight:bold;color:#991b1b;letter-spacing:0">14</div>
<svg style="position:absolute;left:1254.5px;top:244px" width="12" height="18" viewBox="0 0 12 18"><path d="M6 17V1.8 M1 6.8 L6 1.8 L11 6.8" fill="none" stroke="#065f46" stroke-width="2.3" stroke-linecap="butt" stroke-linejoin="miter"/></svg>
<div style="position:absolute;left:1281.0px;top:243.6px;font-size:24px;line-height:24px;white-space:nowrap;font-family:'Liberation Mono',monospace;color:#065f46">16</div>
<svg style="position:absolute;left:1377.5px;top:244px" width="12" height="18" viewBox="0 0 12 18"><path d="M6 1V16.2 M1 11.2 L6 16.2 L11 11.2" fill="none" stroke="#991b1b" stroke-width="2.3" stroke-linecap="butt" stroke-linejoin="miter"/></svg>
<div style="position:absolute;left:1404.0px;top:243.6px;font-size:24px;line-height:24px;white-space:nowrap;font-family:'Liberation Mono',monospace;color:#991b1b">2</div>
<div style="position:absolute;left:1520.0px;top:243.6px;font-size:24px;line-height:24px;white-space:nowrap;font-family:'Liberation Mono',monospace;color:#737373">20</div>
<div style="position:absolute;left:1666.0px;top:243.6px;font-size:24px;line-height:24px;white-space:nowrap;font-family:'Liberation Mono',monospace;color:#737373">100</div>
<div style="position:absolute;left:1817.0px;top:243.6px;font-size:24px;line-height:24px;white-space:nowrap;font-family:'Liberation Mono',monospace;color:#737373">30</div>
<div style="position:absolute;left:0;top:422px;width:1980px;height:2px;background:#e5e5e5"></div>
<div style="position:absolute;left:32.0px;top:339.6px;font-size:24px;line-height:24px;white-space:nowrap;font-family:'Liberation Mono',monospace;font-weight:bold;color:#0a0a0a">STR-002</div>
<div style="position:absolute;left:32.0px;top:374.0px;font-size:22px;line-height:22px;white-space:nowrap;color:#737373">Component Workshop Store</div>
<div style="position:absolute;left:378.0px;top:357.6px;font-size:24px;line-height:24px;white-space:nowrap;font-family:'Liberation Mono',monospace;font-weight:bold;color:#2563eb">P-FLT-001</div>
<div style="position:absolute;left:631.0px;top:348.7px;font-size:26px;line-height:26px;white-space:nowrap;color:#0a0a0a;letter-spacing:-0.2px">Oil Filter Element</div>
<div style="position:absolute;left:1047.0px;top:354.0px;font-size:26px;line-height:26px;white-space:nowrap;font-weight:bold;color:#991b1b;letter-spacing:0">5</div>
<svg style="position:absolute;left:1254.5px;top:358px" width="12" height="18" viewBox="0 0 12 18"><path d="M6 17V1.8 M1 6.8 L6 1.8 L11 6.8" fill="none" stroke="#065f46" stroke-width="2.3" stroke-linecap="butt" stroke-linejoin="miter"/></svg>
<div style="position:absolute;left:1281.0px;top:357.6px;font-size:24px;line-height:24px;white-space:nowrap;font-family:'Liberation Mono',monospace;color:#065f46">5</div>
<svg style="position:absolute;left:1377.5px;top:358px" width="12" height="18" viewBox="0 0 12 18"><path d="M6 1V16.2 M1 11.2 L6 16.2 L11 11.2" fill="none" stroke="#991b1b" stroke-width="2.3" stroke-linecap="butt" stroke-linejoin="miter"/></svg>
<div style="position:absolute;left:1404.0px;top:357.6px;font-size:24px;line-height:24px;white-space:nowrap;font-family:'Liberation Mono',monospace;color:#991b1b">0</div>
<div style="position:absolute;left:1520.0px;top:357.6px;font-size:24px;line-height:24px;white-space:nowrap;font-family:'Liberation Mono',monospace;color:#737373">10</div>
<div style="position:absolute;left:1666.0px;top:357.6px;font-size:24px;line-height:24px;white-space:nowrap;font-family:'Liberation Mono',monospace;color:#737373">50</div>
<div style="position:absolute;left:1817.0px;top:357.6px;font-size:24px;line-height:24px;white-space:nowrap;font-family:'Liberation Mono',monospace;color:#737373">15</div>
<div style="position:absolute;left:0;top:538px;width:1980px;height:2px;background:#e5e5e5"></div>
<div style="position:absolute;left:32.0px;top:454.6px;font-size:24px;line-height:24px;white-space:nowrap;font-family:'Liberation Mono',monospace;font-weight:bold;color:#0a0a0a">STR-001</div>
<div style="position:absolute;left:32.0px;top:489.0px;font-size:22px;line-height:22px;white-space:nowrap;color:#737373">Main Hangar Store</div>
<div style="position:absolute;left:378.0px;top:472.6px;font-size:24px;line-height:24px;white-space:nowrap;font-family:'Liberation Mono',monospace;font-weight:bold;color:#2563eb">P-HF-001</div>
<div style="position:absolute;left:631.0px;top:463.7px;font-size:26px;line-height:26px;white-space:nowrap;color:#0a0a0a;letter-spacing:-0.2px">Hydraulic Fluid MIL-H-5606</div>
<div style="position:absolute;left:1047.0px;top:469.0px;font-size:26px;line-height:26px;white-space:nowrap;font-weight:bold;color:#991b1b;letter-spacing:0">15</div>
<svg style="position:absolute;left:1254.5px;top:473px" width="12" height="18" viewBox="0 0 12 18"><path d="M6 17V1.8 M1 6.8 L6 1.8 L11 6.8" fill="none" stroke="#065f46" stroke-width="2.3" stroke-linecap="butt" stroke-linejoin="miter"/></svg>
<div style="position:absolute;left:1281.0px;top:472.6px;font-size:24px;line-height:24px;white-space:nowrap;font-family:'Liberation Mono',monospace;color:#065f46">20</div>
<svg style="position:absolute;left:1377.5px;top:473px" width="12" height="18" viewBox="0 0 12 18"><path d="M6 1V16.2 M1 11.2 L6 16.2 L11 11.2" fill="none" stroke="#991b1b" stroke-width="2.3" stroke-linecap="butt" stroke-linejoin="miter"/></svg>
<div style="position:absolute;left:1404.0px;top:472.6px;font-size:24px;line-height:24px;white-space:nowrap;font-family:'Liberation Mono',monospace;color:#991b1b">5</div>
<div style="position:absolute;left:1520.0px;top:472.6px;font-size:24px;line-height:24px;white-space:nowrap;font-family:'Liberation Mono',monospace;color:#737373">50</div>
<div style="position:absolute;left:1666.0px;top:472.6px;font-size:24px;line-height:24px;white-space:nowrap;font-family:'Liberation Mono',monospace;color:#737373">200</div>
<div style="position:absolute;left:1817.0px;top:472.6px;font-size:24px;line-height:24px;white-space:nowrap;font-family:'Liberation Mono',monospace;color:#737373">75</div>
<div style="position:absolute;left:0;top:652px;width:1980px;height:2px;background:#e5e5e5"></div>
<div style="position:absolute;left:32.0px;top:570.6px;font-size:24px;line-height:24px;white-space:nowrap;font-family:'Liberation Mono',monospace;font-weight:bold;color:#0a0a0a">STR-001</div>
<div style="position:absolute;left:32.0px;top:605.0px;font-size:22px;line-height:22px;white-space:nowrap;color:#737373">Main Hangar Store</div>
<div style="position:absolute;left:378.0px;top:588.6px;font-size:24px;line-height:24px;white-space:nowrap;font-family:'Liberation Mono',monospace;font-weight:bold;color:#2563eb">P-GSK-001</div>
<div style="position:absolute;left:631.0px;top:579.7px;font-size:26px;line-height:26px;white-space:nowrap;color:#0a0a0a;letter-spacing:-0.2px">Exhaust Gasket Set</div>
<div style="position:absolute;left:1047.0px;top:585.0px;font-size:26px;line-height:26px;white-space:nowrap;font-weight:bold;color:#991b1b;letter-spacing:0">1</div>
<svg style="position:absolute;left:1254.5px;top:589px" width="12" height="18" viewBox="0 0 12 18"><path d="M6 17V1.8 M1 6.8 L6 1.8 L11 6.8" fill="none" stroke="#065f46" stroke-width="2.3" stroke-linecap="butt" stroke-linejoin="miter"/></svg>
<div style="position:absolute;left:1281.0px;top:588.6px;font-size:24px;line-height:24px;white-space:nowrap;font-family:'Liberation Mono',monospace;color:#065f46">3</div>
<svg style="position:absolute;left:1377.5px;top:589px" width="12" height="18" viewBox="0 0 12 18"><path d="M6 1V16.2 M1 11.2 L6 16.2 L11 11.2" fill="none" stroke="#991b1b" stroke-width="2.3" stroke-linecap="butt" stroke-linejoin="miter"/></svg>
<div style="position:absolute;left:1404.0px;top:588.6px;font-size:24px;line-height:24px;white-space:nowrap;font-family:'Liberation Mono',monospace;color:#991b1b">2</div>
<div style="position:absolute;left:1520.0px;top:588.6px;font-size:24px;line-height:24px;white-space:nowrap;font-family:'Liberation Mono',monospace;color:#737373">5</div>
<div style="position:absolute;left:1666.0px;top:588.6px;font-size:24px;line-height:24px;white-space:nowrap;font-family:'Liberation Mono',monospace;color:#737373">25</div>
<div style="position:absolute;left:1817.0px;top:588.6px;font-size:24px;line-height:24px;white-space:nowrap;font-family:'Liberation Mono',monospace;color:#737373">8</div>
<div style="position:absolute;left:32.0px;top:684.6px;font-size:24px;line-height:24px;white-space:nowrap;font-family:'Liberation Mono',monospace;font-weight:bold;color:#0a0a0a">STR-001</div>
<div style="position:absolute;left:32.0px;top:719.0px;font-size:22px;line-height:22px;white-space:nowrap;color:#737373">Main Hangar Store</div>
<div style="position:absolute;left:378.0px;top:702.6px;font-size:24px;line-height:24px;white-space:nowrap;font-family:'Liberation Mono',monospace;font-weight:bold;color:#2563eb">P-FLT-001</div>
<div style="position:absolute;left:631.0px;top:693.7px;font-size:26px;line-height:26px;white-space:nowrap;color:#0a0a0a;letter-spacing:-0.2px">Oil Filter Element</div>
<div style="position:absolute;left:1047.0px;top:699.0px;font-size:26px;line-height:26px;white-space:nowrap;font-weight:bold;color:#991b1b;letter-spacing:0">1</div>
<svg style="position:absolute;left:1254.5px;top:703px" width="12" height="18" viewBox="0 0 12 18"><path d="M6 17V1.8 M1 6.8 L6 1.8 L11 6.8" fill="none" stroke="#065f46" stroke-width="2.3" stroke-linecap="butt" stroke-linejoin="miter"/></svg>
<div style="position:absolute;left:1281.0px;top:702.6px;font-size:24px;line-height:24px;white-space:nowrap;font-family:'Liberation Mono',monospace;color:#065f46">1</div>
<svg style="position:absolute;left:1377.5px;top:703px" width="12" height="18" viewBox="0 0 12 18"><path d="M6 1V16.2 M1 11.2 L6 16.2 L11 11.2" fill="none" stroke="#991b1b" stroke-width="2.3" stroke-linecap="butt" stroke-linejoin="miter"/></svg>
<div style="position:absolute;left:1404.0px;top:702.6px;font-size:24px;line-height:24px;white-space:nowrap;font-family:'Liberation Mono',monospace;color:#991b1b">0</div>
<div style="position:absolute;left:1520.0px;top:702.6px;font-size:24px;line-height:24px;white-space:nowrap;font-family:'Liberation Mono',monospace;color:#737373">10</div>
<div style="position:absolute;left:1666.0px;top:702.6px;font-size:24px;line-height:24px;white-space:nowrap;font-family:'Liberation Mono',monospace;color:#737373">50</div>
<div style="position:absolute;left:1817.0px;top:702.6px;font-size:24px;line-height:24px;white-space:nowrap;font-family:'Liberation Mono',monospace;color:#737373">15</div>
</div>
<div style="position:absolute;left:529.0px;top:1564.3px;font-size:28px;line-height:28px;white-space:nowrap;color:#737373">Showing 1–6 of 6</div>
<div style="position:absolute;left:1711.0px;top:1564.0px;font-size:28px;line-height:28px;white-space:nowrap;color:#737373;letter-spacing:-0.4px">Rows per page</div>
<div style="position:absolute;left:1908px;top:1548px;width:122px;height:72px;border:2px solid #e5e5e5;border-radius:14px;background:#fff;"></div>
<div style="position:absolute;left:1934.0px;top:1566.3px;font-size:28px;line-height:28px;white-space:nowrap;color:#0a0a0a">25</div>
<svg style="position:absolute;left:2000px;top:1570.5px" width="24" height="18" viewBox="0 0 24 18"><path d="M4.2 3.8 L12 11.6 L19.8 3.8" fill="none" stroke="#0a0a0a" stroke-width="3.6" stroke-linecap="butt" stroke-linejoin="miter"/></svg>
<div style="position:absolute;left:2063.4px;top:1564.2px;font-size:28px;line-height:28px;white-space:nowrap;color:#737373;letter-spacing:-0.8px">Page 1 of 1</div>
<div style="position:absolute;left:2232px;top:1547px;width:64px;height:72px;border:2px solid #ececec;border-radius:14px;background:#f9f9f9;"></div>
<svg style="position:absolute;left:2248.0px;top:1562.0px;" width="32" height="32" viewBox="0 0 24 24" fill="none" stroke="#b3b3b3" stroke-width="2" stroke-linecap="round" stroke-linejoin="round"><path d="m11 17-5-5 5-5"/><path d="m18 17-5-5 5-5"/></svg>
<div style="position:absolute;left:2304px;top:1547px;width:64px;height:72px;border:2px solid #ececec;border-radius:14px;background:#f9f9f9;"></div>
<svg style="position:absolute;left:2320.0px;top:1562.0px;" width="32" height="32" viewBox="0 0 24 24" fill="none" stroke="#b3b3b3" stroke-width="2" stroke-linecap="round" stroke-linejoin="round"><path d="m15 18-6-6 6-6"/></svg>
<div style="position:absolute;left:2376px;top:1547px;width:64px;height:72px;border:2px solid #ececec;border-radius:14px;background:#f9f9f9;"></div>
<svg style="position:absolute;left:2392.0px;top:1562.0px;" width="32" height="32" viewBox="0 0 24 24" fill="none" stroke="#b3b3b3" stroke-width="2" stroke-linecap="round" stroke-linejoin="round"><path d="m9 18 6-6-6-6"/></svg>
<div style="position:absolute;left:2448px;top:1547px;width:64px;height:72px;border:2px solid #ececec;border-radius:14px;background:#f9f9f9;"></div>
<svg style="position:absolute;left:2464.0px;top:1562.0px;" width="32" height="32" viewBox="0 0 24 24" fill="none" stroke="#b3b3b3" stroke-width="2" stroke-linecap="round" stroke-linejoin="round"><path d="m6 17 5-5-5-5"/><path d="m13 17 5-5-5-5"/></svg>
<div style="position:absolute;left:38px;top:1486px;width:76px;height:76px;border-radius:50%;background:#333;border:2px solid #0d0d0d;box-shadow:inset 0 0 0 2px #4a4a4a, 0 14px 50px rgba(0,0,0,0.12)"></div>
<svg style="position:absolute;left:60px;top:1508px" width="32" height="36" viewBox="0 0 32 36">
<defs><linearGradient id="g1" x1="0" y1="0" x2="1" y2="1"><stop offset="0.55" stop-color="#fff"/><stop offset="1" stop-color="#fff" stop-opacity="0"/></linearGradient>
<linearGradient id="g2" x1="0" y1="0" x2="0" y2="1"><stop offset="0" stop-color="#fff"/><stop offset="1" stop-color="#fff" stop-opacity="0"/></linearGradient></defs>
<rect x="3.5" y="4.5" width="5" height="26" fill="#fff"/>
<polygon points="3.5,4.5 8.8,4.5 28,32 22.5,32" fill="url(#g1)"/>
<rect x="22.5" y="4.5" width="5" height="18" fill="url(#g2)"/>
</svg>
</body></html>
